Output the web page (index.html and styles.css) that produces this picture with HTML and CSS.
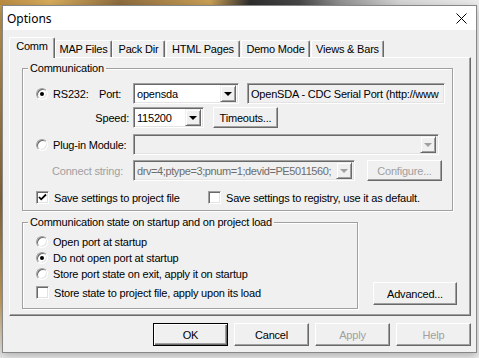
FILE: index.html
```html
<!doctype html>
<html lang="en">
<head>
	<meta charset="utf-8">
	<title>Options</title>
	<link rel="stylesheet" href="styles.css">
</head>
<body>
	<div class="window">
		<div class="titlebar">
			<span class="title">Options</span>
			<svg class="close" width="11" height="11" viewBox="0 0 11 11">
				<path d="M0.5 0.5L10.5 10.5M10.5 0.5L0.5 10.5" stroke="#000" stroke-width="1"/>
			</svg>
		</div>

		<div class="client">
			<!--вкладки-->
			<div class="tabs">
				<div class="tab tabActive tabComm">Comm</div>
				<div class="tab tabMap">MAP Files</div>
				<div class="tab tabPack">Pack Dir</div>
				<div class="tab tabHtml">HTML Pages</div>
				<div class="tab tabDemo">Demo Mode</div>
				<div class="tab tabViews">Views &amp; Bars</div>
			</div>

			<div class="panel">
				<fieldset class="group groupComm">
					<legend>Communication</legend>

					<div class="row rowRs">
						<span class="radio radioOn"></span>
						<span class="lbl lblRs">RS232:</span>
						<span class="lbl lblPort">Port:</span>
						<div class="combo comboPort">
							<span class="comboText">opensda</span>
							<span class="arrow"><i></i></span>
						</div>
						<div class="edit editDesc">OpenSDA - CDC Serial Port (http://www</div>
					</div>

					<div class="row rowSpeed">
						<span class="lbl lblSpeed">Speed:</span>
						<div class="combo comboSpeed">
							<span class="comboText">115200</span>
							<span class="arrow"><i></i></span>
						</div>
						<button class="btn btnTimeouts">Timeouts...</button>
					</div>

					<div class="row rowPlugin">
						<span class="radio"></span>
						<span class="lbl lblPlugin">Plug-in Module:</span>
						<div class="combo comboOff comboPlugin">
							<span class="comboText"></span>
							<span class="arrow"><i></i></span>
						</div>
					</div>

					<div class="row rowConnect">
						<span class="lbl lblOff lblConnect">Connect string:</span>
						<div class="combo comboOff comboConnect">
							<span class="comboText">drv=4;ptype=3;pnum=1;devid=PE5011560;</span>
							<span class="arrow"><i></i></span>
						</div>
						<button class="btn btnConfigure" disabled>Configure...</button>
					</div>

					<div class="row rowSave">
						<span class="check">
							<svg width="9" height="9" viewBox="0 0 9 9">
								<polyline points="1,4 3.2,6.3 8,1.5" fill="none" stroke="#000" stroke-width="1.8"/>
							</svg>
						</span>
						<span class="lbl lblSave">Save settings to project file</span>
						<span class="check"></span>
						<span class="lbl lblReg">Save settings to registry, use it as default.</span>
					</div>
				</fieldset>

				<div class="lower">
					<fieldset class="group groupState">
						<legend>Communication state on startup and on project load</legend>
						<div class="row stateRow stateFirst">
							<span class="radio"></span>
							<span class="lbl lblState">Open port at startup</span>
						</div>
						<div class="row stateRow">
							<span class="radio radioOn"></span>
							<span class="lbl lblState">Do not open port at startup</span>
						</div>
						<div class="row stateRow">
							<span class="radio"></span>
							<span class="lbl lblState">Store port state on exit, apply it on startup</span>
						</div>
						<div class="row stateRow stateCheck">
							<span class="check"></span>
							<span class="lbl lblState">Store state to project file, apply upon its load</span>
						</div>
					</fieldset>
					<button class="btn btnAdvanced">Advanced...</button>
				</div>
			</div>

			<div class="actions">
				<button class="btn btnDefault">OK</button>
				<button class="btn">Cancel</button>
				<button class="btn" disabled>Apply</button>
				<button class="btn" disabled>Help</button>
			</div>
		</div>
	</div>
</body>
</html>
```

FILE: styles.css
```css
* {
	box-sizing: border-box;
}

html, body {
	margin: 0;
}

body {
	width: 479px;
	height: 358px;
	overflow: hidden;
	padding: 5px 0 0 2px;
	font-family: "Liberation Sans", Arial, sans-serif;
	font-size: 11px;
	letter-spacing: -0.2px;
	color: #000;
	background:
		linear-gradient(90deg, #b98b42 0, #d6ab5c 50px, #8d6c3e 120px, #c99f55 210px, #2e2e2e 250px, #474747 300px, #8f8f8f 340px, #d4d4d4 400px, #ececec 479px) 0 0 / 100% 5px no-repeat,
		linear-gradient(#c29a50, #8b6a3c 200px, #c8a25c 300px, #e6e6e6 352px) 0 0 / 2px 100% no-repeat,
		#ececec;
}

/*окно*/
.window {
	width: 475px;
	height: 348px;
	border: 1px solid #878787;
	background-color: #f0f0f0;
	box-shadow: 0 3px 8px rgba(0, 0, 0, .25);
	display: flex;
	flex-direction: column;
}

.titlebar {
	height: 24px;
	flex: none;
	background-color: #fff;
	display: flex;
	align-items: center;
	justify-content: space-between;
	padding: 0 9px 0 4px;
}

.title {
	font-family: "Noto Sans", "Open Sans", sans-serif;
	font-size: 12px;
	letter-spacing: 0;
}

.client {
	padding: 7px 5px 0 6px;
}

/*вкладки*/
.tabs {
	display: flex;
	align-items: flex-end;
	height: 20px;
	position: relative;
	z-index: 1;
}

.tab {
	height: 17px;
	line-height: 16px;
	text-align: center;
	background-color: #f0f0f0;
	border: 1px solid #fff;
	border-bottom: none;
	border-right-color: #696969;
	border-radius: 2px 2px 0 0;
	box-shadow: inset -1px 0 #a0a0a0;
}

.tabActive {
	height: 21px;
	line-height: 17px;
	margin-bottom: -1px;
}

.tabComm { width: 46px; }
.tabMap { width: 57px; }
.tabPack { width: 53px; }
.tabHtml { width: 74px; margin-left: 1px; }
.tabDemo { width: 69px; margin-left: 1px; }
.tabViews { width: 73px; margin-left: 1px; }

.panel {
	width: 462px;
	height: 259px;
	border: 1px solid;
	border-color: #fff #696969 #696969 #fff;
	box-shadow: inset -1px -1px #a0a0a0;
	padding: 4px 0 0 12px;
}

/*группы*/
.group {
	margin: 0;
	padding: 0 0 0 13px;
	min-width: 0;
	border: 1px solid #a0a0a0;
	box-shadow: inset 1px 1px #fff, 1px 1px #fff;
}

.group legend {
	margin-left: -8px;
	padding: 0 2px;
	line-height: 13px;
	background-color: #f0f0f0;
}

.groupComm {
	width: 431px;
	height: 149px;
}

.row {
	display: flex;
	align-items: center;
	height: 21px;
}

.rowRs { margin-top: 8px; }
.rowSpeed { margin-top: 3px; }
.rowPlugin { margin-top: 6px; }
.rowConnect { margin-top: 5px; }
.rowSave { margin-top: 10px; height: 13px; }

.lbl {
	white-space: nowrap;
	flex: none;
}

.lblRs { width: 46px; margin-left: 5px; }
.lblPort { width: 34px; }
.lblSpeed { width: 97px; padding-right: 4px; text-align: right; }
.lblPlugin { width: 80px; margin-left: 5px; }
.lblConnect { width: 81px; margin-left: 16px; }
.lblSave { width: 154px; margin-left: 5px; }
.lblReg { margin-left: 5px; }
.lblState { margin-left: 5px; }

.lblOff {
	color: #a0a0a0;
}

/*переключатели*/
.radio {
	width: 12px;
	height: 12px;
	flex: none;
	border-radius: 50%;
	border: 1px solid;
	border-color: #a0a0a0 #fff #fff #a0a0a0;
	box-shadow: inset 1px 1px #696969, inset -1px -1px #e3e3e3;
	background-color: #fff;
	display: flex;
	align-items: center;
	justify-content: center;
}

.radioOn::after {
	content: "";
	width: 4px;
	height: 4px;
	border-radius: 50%;
	background-color: #000;
}

.check {
	width: 13px;
	height: 13px;
	flex: none;
	border: 1px solid;
	border-color: #a0a0a0 #fff #fff #a0a0a0;
	box-shadow: inset 1px 1px #696969, inset -1px -1px #e3e3e3;
	background-color: #fff;
	display: flex;
	align-items: center;
	justify-content: center;
}

/*поля ввода*/
.combo, .edit {
	height: 21px;
	flex: none;
	border: 1px solid;
	border-color: #a0a0a0 #fff #fff #a0a0a0;
	box-shadow: inset 1px 1px #696969, inset -1px -1px #e3e3e3;
	background-color: #fff;
	display: flex;
	align-items: center;
	padding: 2px;
	overflow: hidden;
	white-space: nowrap;
}

.comboText {
	flex: 1;
	overflow: hidden;
	padding-left: 1px;
}

.arrow {
	width: 16px;
	height: 17px;
	flex: none;
	border: 1px solid;
	border-color: #f0f0f0 #696969 #696969 #f0f0f0;
	box-shadow: inset 1px 1px #fff, inset -1px -1px #a0a0a0;
	background-color: #f0f0f0;
	display: flex;
	align-items: center;
	justify-content: center;
}

.arrow i {
	width: 0;
	height: 0;
	border-left: 4px solid transparent;
	border-right: 4px solid transparent;
	border-top: 4px solid #000;
	margin-top: 1px;
}

.comboOff {
	background-color: #f0f0f0;
	color: #6d6d6d;
}

.comboOff .arrow i {
	border-top-color: #a0a0a0;
}

.comboPort { width: 106px; }
.comboSpeed { width: 71px; }
.comboPlugin { width: 306px; }
.comboConnect { width: 222px; }

.comboConnect .comboText {
	letter-spacing: -0.4px;
}

.edit {
	width: 198px;
	margin-left: 8px;
	background-color: #f0f0f0;
	padding-left: 3px;
}

/*кнопки*/
.btn {
	height: 23px;
	flex: none;
	padding: 0;
	font: inherit;
	letter-spacing: inherit;
	color: #000;
	background-color: #f0f0f0;
	border: 1px solid;
	border-color: #fff #696969 #696969 #fff;
	box-shadow: inset -1px -1px #a0a0a0;
	width: 75px;
}

.btn:disabled {
	color: #a0a0a0;
}

.btnDefault {
	border-color: #000;
	box-shadow: inset 1px 1px #fff, inset -1px -1px #696969, inset -2px -2px #a0a0a0;
}

.btnTimeouts {
	width: 65px;
	height: 21px;
	margin-left: 9px;
}

.btnConfigure {
	height: 21px;
	margin-left: 12px;
}

.lower {
	display: flex;
	align-items: flex-start;
	margin-top: 5px;
}

.groupState {
	width: 336px;
	height: 93px;
}

.stateRow {
	height: 13px;
	margin-top: 3px;
}

.stateFirst,
.stateCheck {
	margin-top: 6px;
}

.btnAdvanced {
	width: 84px;
	margin-left: 15px;
	margin-top: 66px;
}

.actions {
	display: flex;
	justify-content: flex-end;
	gap: 6px;
	margin-top: 7px;
}
```
